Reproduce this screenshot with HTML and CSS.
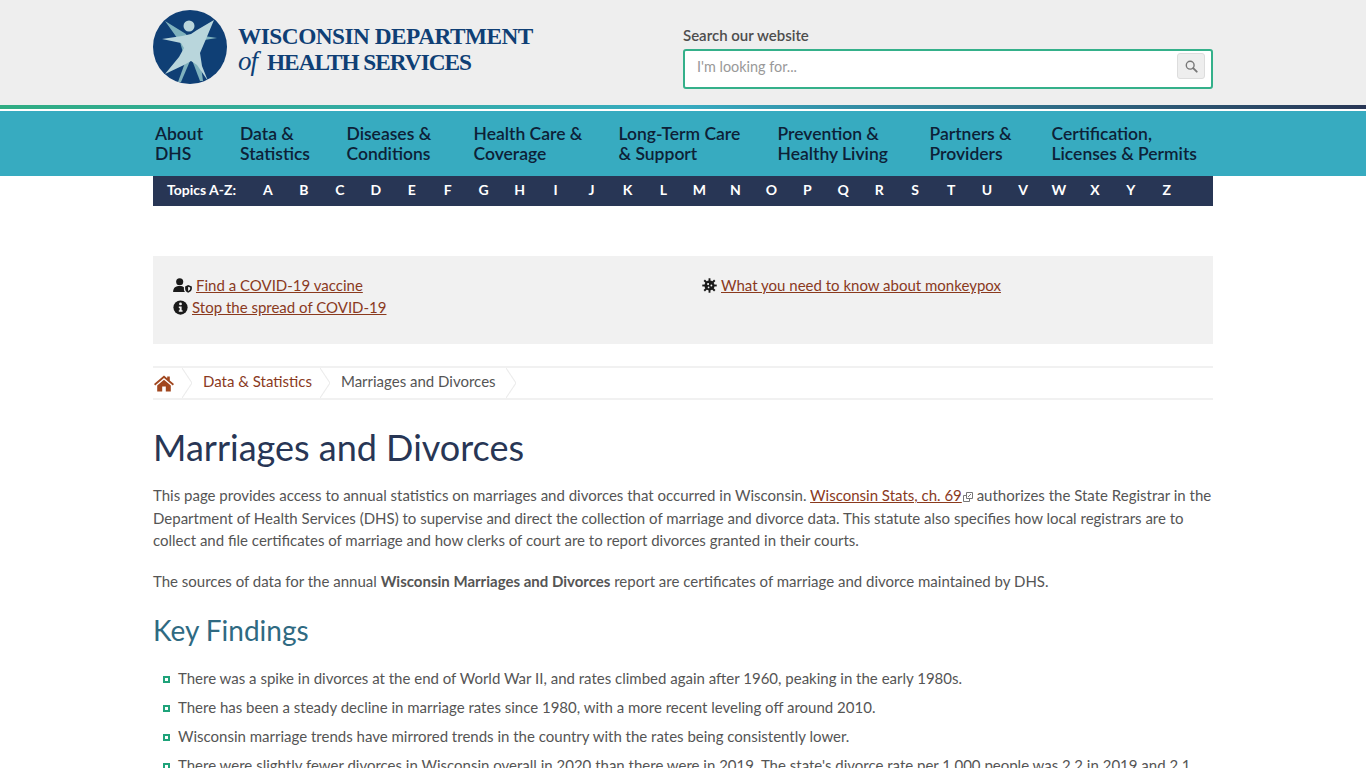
FILE: index.html
```html
<!DOCTYPE html>
<html lang="en">
<head>
  <meta charset="UTF-8">
  <meta name="viewport" content="width=device-width, initial-scale=1.0">
  <title>Marriages and Divorces</title>

  <link rel="stylesheet" href="styles.css">
</head>
<body>

  <header class="site-header">
    <div class="wrap header-inner">
      <a class="logo" href="#">
        <svg class="logo-mark" viewBox="0 0 74 74" width="74" height="74" aria-hidden="true">
          <circle cx="37" cy="37" r="37" fill="#0f3f75"/>
          <path d="M12 11 L33 24 L38 34 L31 46 L27 32 Z" fill="#7fb2bd"/>
          <path d="M45 25 L64 28 L45 31 Z" fill="#7fb2bd"/>
          <path d="M33 50 L25 72 L28 72 L37 51 Z" fill="#7fb2bd"/>
          <path d="M39 50 L47 71 L50 71 L47 48 Z" fill="#7fb2bd"/>
          <path d="M9 29 L29 26 L38 24 L44 20 L61 10 L53 29 L47 43 L49 56 L55 71 L44 55 L38 51 L31 55 L12 64 L26 47 L31 38 L28 33 Z" fill="#b9d6dc"/>
          <circle cx="36" cy="16" r="5.5" fill="#b9d6dc"/>
        </svg>
        <span class="logo-text">
          <span class="logo-line">WISCONSIN DEPARTMENT</span>
          <span class="logo-line logo-line-tight"><i class="logo-of">of</i>HEALTH SERVICES</span>
        </span>
      </a>
      <form class="search">
        <label class="search-label" for="q">Search our website</label>
        <div class="search-box">
          <input class="search-input" type="text" id="q" placeholder="I'm looking for...">
          <button class="search-btn" type="button" aria-label="Search">
            <svg viewBox="0 0 14 14" width="13" height="13" aria-hidden="true">
              <circle cx="5.6" cy="5.6" r="4.2" fill="none" stroke="#777" stroke-width="1.5"/>
              <path d="M8.8 8.8 L12.6 12.6" stroke="#777" stroke-width="2" stroke-linecap="round"/>
            </svg>
          </button>
        </div>
      </form>
    </div>
  </header>

  <div class="stripe"></div>

  <nav class="main-nav">
    <div class="wrap main-nav-inner">
      <a href="#">About<br>DHS</a>
      <a href="#">Data &amp;<br>Statistics</a>
      <a href="#">Diseases &amp;<br>Conditions</a>
      <a href="#">Health Care &amp;<br>Coverage</a>
      <a href="#">Long-Term Care<br>&amp; Support</a>
      <a href="#">Prevention &amp;<br>Healthy Living</a>
      <a href="#">Partners &amp;<br>Providers</a>
      <a href="#">Certification,<br>Licenses &amp; Permits</a>
    </div>
  </nav>

  <div class="wrap">
    <div class="az">
      <span class="az-label">Topics A-Z:</span>
      <div class="az-letters">
        <a href="#">A</a><a href="#">B</a><a href="#">C</a><a href="#">D</a><a href="#">E</a><a href="#">F</a><a href="#">G</a><a href="#">H</a><a href="#">I</a><a href="#">J</a><a href="#">K</a><a href="#">L</a><a href="#">M</a><a href="#">N</a><a href="#">O</a><a href="#">P</a><a href="#">Q</a><a href="#">R</a><a href="#">S</a><a href="#">T</a><a href="#">U</a><a href="#">V</a><a href="#">W</a><a href="#">X</a><a href="#">Y</a><a href="#">Z</a>
      </div>
    </div>

    <section class="alerts">
      <div class="alerts-col">
        <p class="alert-row">
          <svg class="alert-icon" viewBox="0 0 20 16" width="19" height="15" aria-hidden="true">
            <circle cx="7" cy="4" r="3.8" fill="#1a1a1a"/>
            <path d="M0 15 C0 10 3 8.5 7 8.5 C9 8.5 10.5 9 11.5 9.8 L11.5 12 C11.5 13.5 12 14.4 12.8 15 Z" fill="#1a1a1a"/>
            <path d="M16 7.5 L20 9 L20 11.5 C20 13.5 18 15 16 15.8 C14 15 12.8 13.5 12.8 11.5 L12.8 9 Z" fill="#1a1a1a"/>
            <path d="M16 9.4 L18.2 10.2 L18.2 11.5 C18.2 12.5 17.2 13.4 16 14 Z" fill="#f1f1f1"/>
          </svg>
          <a href="#">Find a COVID-19 vaccine</a>
        </p>
        <p class="alert-row">
          <svg class="alert-icon" viewBox="0 0 16 16" width="15" height="15" aria-hidden="true">
            <circle cx="8" cy="8" r="7.6" fill="#1a1a1a"/>
            <circle cx="8" cy="4.2" r="1.5" fill="#f1f1f1"/>
            <path d="M6.2 6.8 H9.2 V11 H10.2 V12.6 H6.2 V11 H7.1 V8.4 H6.2 Z" fill="#f1f1f1"/>
          </svg>
          <a href="#">Stop the spread of COVID-19</a>
        </p>
      </div>
      <div class="alerts-col">
        <p class="alert-row">
          <svg class="alert-icon" viewBox="0 0 16 16" width="15" height="15" aria-hidden="true">
            <circle cx="8" cy="8" r="5.4" fill="#1a1a1a"/>
            <g stroke="#1a1a1a" stroke-width="2">
              <path d="M8 0.3 V15.7"/>
              <path d="M0.3 8 H15.7"/>
              <path d="M2.4 2.4 L13.6 13.6"/>
              <path d="M13.6 2.4 L2.4 13.6"/>
            </g>
            <circle cx="6.5" cy="6.5" r="1.1" fill="#f1f1f1"/>
            <circle cx="10" cy="8" r="1" fill="#f1f1f1"/>
            <circle cx="7" cy="10" r="0.9" fill="#f1f1f1"/>
          </svg>
          <a href="#">What you need to know about monkeypox</a>
        </p>
      </div>
    </section>

    <ol class="crumbs">
      <li class="crumb crumb-home">
        <a href="#" aria-label="Home">
          <svg viewBox="0 0 20 17" width="20" height="17" aria-hidden="true">
            <path d="M10 0.5 L13.2 3.2 V1.4 H15.8 V5.4 L20 9 L18.8 10.4 L10 3 L1.2 10.4 L0 9 Z" fill="#a1471f"/>
            <path d="M3.2 10.4 L10 4.7 L16.8 10.4 V16.6 H11.8 V11.6 H8.2 V16.6 H3.2 Z" fill="#a1471f"/>
          </svg>
        </a>
      </li>
      <li class="crumb crumb-data"><a href="#">Data &amp; Statistics</a></li>
      <li class="crumb">Marriages and Divorces</li>
    </ol>

    <main class="content">
      <h1>Marriages and Divorces</h1>
      <p>This page provides access to annual statistics on marriages and divorces that occurred in Wisconsin. <a href="#">Wisconsin Stats, ch. 69</a><svg class="ext-icon" viewBox="0 0 10 10" width="10" height="10" aria-hidden="true"><path d="M3.5 0.5 H9.5 V6.5 H3.5 Z M0.5 3.5 H3 M0.5 3.5 V9.5 H6.5 V7 M5 5 L8 2" fill="none" stroke="#777" stroke-width="1"/></svg> authorizes the State Registrar in the Department of Health Services (DHS) to supervise and direct the collection of marriage and divorce data. This statute also specifies how local registrars are to collect and file certificates of marriage and how clerks of court are to report divorces granted in their courts.</p>
      <p>The sources of data for the annual <strong>Wisconsin Marriages and Divorces</strong> report are certificates of marriage and divorce maintained by DHS.</p>
      <h2>Key Findings</h2>
      <ul class="findings">
        <li>There was a spike in divorces at the end of World War II, and rates climbed again after 1960, peaking in the early 1980s.</li>
        <li>There has been a steady decline in marriage rates since 1980, with a more recent leveling off around 2010.</li>
        <li>Wisconsin marriage trends have mirrored trends in the country with the rates being consistently lower.</li>
        <li>There were slightly fewer divorces in Wisconsin overall in 2020 than there were in 2019. The state's divorce rate per 1,000 people was 2.2 in 2019 and 2.1</li>
      </ul>
    </main>
  </div>

</body>
</html>
```

FILE: styles.css
```css
/* General Reset */
*, *::before, *::after {
  margin: 0;
  padding: 0;
  box-sizing: border-box;
}

html, body {
  height: 100%;
  overflow: hidden;
}

body {
  font-family: Lato, "Open Sans", sans-serif;
  font-size: 15px;
  color: #555;
  background-color: #fff;
}

a {
  color: #8a3a1e;
}

.wrap {
  width: 1060px;
  margin: 0 auto;
}

/* Header */
.site-header {
  background-color: #eee;
  height: 105px;
}

.header-inner {
  display: flex;
  justify-content: space-between;
}

.logo {
  display: flex;
  gap: 11px;
  padding-top: 10px;
  text-decoration: none;
}

.logo-mark {
  flex: none;
}

.logo-text {
  display: flex;
  flex-direction: column;
  padding-top: 14px;
  font-family: "Liberation Serif", serif;
  font-weight: bold;
  font-size: 23.3px;
  line-height: 25px;
  letter-spacing: -0.5px;
  color: #0f3f75;
  white-space: nowrap;
}

.logo-line-tight {
  letter-spacing: -1px;
}

.logo-of {
  display: inline-block;
  width: 29px;
  font-weight: normal;
  font-size: 27px;
  line-height: 25px;
}

.search {
  width: 530px;
  padding-top: 26px;
}

.search-label {
  display: block;
  font-size: 15px;
  font-weight: 600;
  line-height: 19px;
  margin-bottom: 4px;
  color: #4d4d4d;
}

.search-box {
  display: flex;
  align-items: flex-start;
  justify-content: space-between;
  height: 40px;
  background-color: #fff;
  border: 2px solid #34b08a;
  border-radius: 3px;
  padding: 2px 6px 0 12px;
}

.search-input {
  flex: 1;
  height: 26px;
  border: none;
  outline: none;
  font-family: inherit;
  font-size: 14.4px;
  color: #333;
}

.search-input::placeholder {
  color: #999;
}

.search-btn {
  display: flex;
  align-items: center;
  justify-content: center;
  width: 28px;
  height: 26px;
  background-color: #eee;
  border: 1px solid #ddd;
  border-radius: 3px;
}

.stripe {
  height: 4px;
  background: linear-gradient(to right, #2fac82 0%, #37abc0 50%, #283655 100%);
}

/* Main navigation */
.main-nav {
  background-color: #37abc0;
  height: 65px;
  margin-top: 2px;
}

.main-nav-inner {
  display: grid;
  grid-template-columns: 85px 106.5px 127px 145px 159px 152px 122px auto;
  padding: 13px 0 0 2px;
}

.main-nav-inner a {
  font-size: 17.5px;
  font-weight: 600;
  line-height: 20px;
  color: #0d2137;
  text-decoration: none;
  white-space: nowrap;
}

/* Topics A-Z */
.az {
  display: flex;
  align-items: center;
  height: 30px;
  background-color: #283655;
  color: #fff;
  padding: 0 0 3px 14px;
}

.az-label {
  width: 83px;
  font-size: 14px;
  font-weight: 700;
}

.az-letters {
  display: flex;
}

.az-letters a {
  width: 35.96px;
  text-align: center;
  font-size: 14px;
  font-weight: 700;
  color: #fff;
  text-decoration: none;
}

/* Alerts */
.alerts {
  display: flex;
  height: 88px;
  margin-top: 50px;
  padding: 18px 20px 0;
  background-color: #f1f1f1;
}

.alerts-col {
  flex: none;
  width: 529px;
}

.alerts-col + .alerts-col {
  width: 491px;
}

.alert-row {
  display: flex;
  align-items: center;
  gap: 4px;
  height: 22px;
  font-size: 15px;
}

.alert-icon {
  flex: none;
}

/* Breadcrumbs */
.crumbs {
  display: flex;
  height: 34px;
  margin-top: 22px;
  list-style: none;
  border-top: 2px solid #f1f1f1;
  border-bottom: 2px solid #f1f1f1;
}

.crumb {
  position: relative;
  display: flex;
  align-items: center;
  padding: 0 20px 4px 11px;
  font-size: 15px;
  color: #555;
}

.crumb a {
  text-decoration: none;
}

.crumb::after {
  content: "";
  position: absolute;
  top: 0;
  right: 0;
  width: 10px;
  height: 30px;
  background:
    linear-gradient(to top right, transparent calc(50% - 1px), #eaeaea 50%, transparent calc(50% + 1px)) top / 100% 50% no-repeat,
    linear-gradient(to bottom right, transparent calc(50% - 1px), #eaeaea 50%, transparent calc(50% + 1px)) bottom / 100% 50% no-repeat;
}

.crumb-home {
  padding: 0 18px 0 1px;
}

.crumb-home a {
  display: flex;
}

.crumb-data {
  padding-right: 18px;
}

/* Content */
.content {
  padding-top: 25px;
}

h1 {
  font-size: 36px;
  font-weight: 400;
  line-height: 44px;
  color: #283655;
  margin-bottom: 15px;
}

h2 {
  font-size: 28px;
  font-weight: 400;
  line-height: 34px;
  color: #2f6a82;
  margin: 21px 0 20px;
}

.content p {
  font-size: 15px;
  line-height: 22.5px;
  margin-bottom: 18px;
}

.ext-icon {
  margin-left: 1px;
  vertical-align: -1px;
}

.findings {
  list-style: none;
  padding-left: 25px;
}

.findings li {
  position: relative;
  font-size: 15px;
  line-height: 22.5px;
  margin-bottom: 6.6px;
}

.findings li::before {
  content: "";
  position: absolute;
  left: -15px;
  top: 9px;
  width: 7px;
  height: 7px;
  border: 2px solid #1fa37a;
}
```
